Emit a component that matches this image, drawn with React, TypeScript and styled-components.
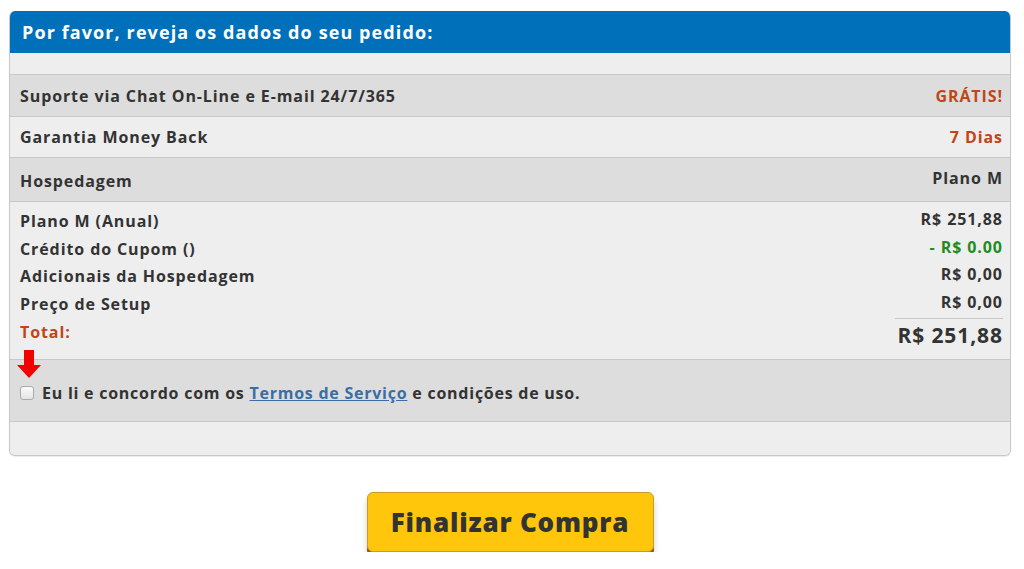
import React from "react";
import styled, { createGlobalStyle } from "styled-components";

const GlobalStyle = createGlobalStyle`
  body {
    margin: 0;
    background: #fff;
    font-family: "Open Sans", "Liberation Sans", sans-serif;
  }
`;

const Page = styled.div`
  padding: 11px 13px 0 9px;
  display: flex;
  flex-direction: column;
  align-items: stretch;
`;

const Panel = styled.div`
  border: 1px solid #c8c8c8;
  border-top: none;
  border-radius: 6px;
  background: #eeeeee;
  overflow: hidden;
  box-shadow: 0 1px 1px rgba(0, 0, 0, 0.08);
`;

const PanelHeader = styled.div`
  background: #0070ba;
  color: #fff;
  font-size: 18px;
  font-weight: 700;
  letter-spacing: 1.1px;
  height: 42px;
  display: flex;
  align-items: center;
  padding: 0 13px;
  margin: 0 -1px;
`;

const Spacer = styled.div<{ $height: number }>`
  height: ${(p) => p.$height}px;
  background: #eeeeee;
`;

const Row = styled.div<{ $dark?: boolean; $height: number }>`
  display: flex;
  justify-content: space-between;
  align-items: center;
  height: ${(p) => p.$height}px;
  box-sizing: border-box;
  padding: 0 8px 0 10px;
  background: ${(p) => (p.$dark ? "#dddddd" : "#eeeeee")};
  border-top: 1px solid #c8c8c8;
  font-size: 16px;
  font-weight: 700;
  letter-spacing: 0.9px;
  color: #333;
`;

const Value = styled.span<{ $color?: string }>`
  color: ${(p) => p.$color || "#333"};
  margin-right: -0.9px;
`;

const Summary = styled.div`
  border-top: 1px solid #c8c8c8;
  padding: 6px 8px 7px 10px;
  display: flex;
  flex-direction: column;
  letter-spacing: 0.9px;
`;

const SummaryLine = styled.div`
  display: flex;
  justify-content: space-between;
  font-size: 16px;
  font-weight: 700;
  color: #333;
  height: 27.5px;
  line-height: 27px;
`;

const LineValue = styled(Value)`
  line-height: 22px;
`;

const TotalLine = styled.div`
  display: flex;
  justify-content: space-between;
  align-items: flex-start;
  font-weight: 700;
`;

const TotalLabel = styled.span`
  color: #c0461a;
  font-size: 16px;
  line-height: 24px;
  padding-top: 2px;
`;

const TotalValue = styled.span`
  color: #333;
  font-size: 21px;
  border-top: 1px solid #c8c8c8;
  min-width: 108px;
  text-align: right;
  line-height: 33px;
  margin-right: -0.9px;
`;

const Agree = styled.div`
  position: relative;
  background: #dddddd;
  border-top: 1px solid #c8c8c8;
  border-bottom: 1px solid #c8c8c8;
  height: 63px;
  box-sizing: border-box;
  display: flex;
  align-items: center;
  padding: 4px 10px 0 10px;
  font-size: 16px;
  font-weight: 700;
  letter-spacing: 0.75px;
  color: #333;
`;

const Arrow = styled.svg`
  position: absolute;
  left: 7px;
  top: -10px;
`;

const Check = styled.span`
  width: 12px;
  height: 12px;
  border: 1px solid #aaa;
  border-radius: 3px;
  background: linear-gradient(#fafafa, #e4e4e4);
  margin-right: 8px;
  flex-shrink: 0;
`;

const TermsLink = styled.a`
  color: #3a6ea5;
  text-decoration: underline;
  margin: 0 5px;
`;

const ButtonWrap = styled.div`
  display: flex;
  justify-content: center;
  padding-top: 36px;
`;

const BuyButton = styled.button`
  width: 287px;
  height: 60px;
  background: #ffc60b;
  border: 1px solid #c9992a;
  border-radius: 6px;
  box-shadow: 0 4px 0 #8a5b2a, 0 6px 6px rgba(0, 0, 0, 0.18);
  font-family: "Open Sans", "Liberation Sans", sans-serif;
  font-size: 26px;
  font-weight: 800;
  letter-spacing: 0.8px;
  color: #333;
  cursor: pointer;
`;

export default function App() {
  return (
    <>
      <GlobalStyle />
      <Page>
        <Panel>
          <PanelHeader>Por favor, reveja os dados do seu pedido:</PanelHeader>
          <Spacer $height={21} />
          <Row $dark $height={42}>
            <span>Suporte via Chat On-Line e E-mail 24/7/365</span>
            <Value $color="#c0461a">GRÁTIS!</Value>
          </Row>
          <Row $height={41}>
            <span>Garantia Money Back</span>
            <Value $color="#c0461a">7 Dias</Value>
          </Row>
          <Row $dark $height={44}>
            <span style={{ paddingTop: 3 }}>Hospedagem</span>
            <Value style={{ paddingBottom: 4 }}>Plano M</Value>
          </Row>
          <Summary>
            <SummaryLine>
              <span>Plano M (Anual)</span>
              <LineValue>R$ 251,88</LineValue>
            </SummaryLine>
            <SummaryLine>
              <span>Crédito do Cupom ()</span>
              <LineValue $color="#1e8c1e">- R$ 0.00</LineValue>
            </SummaryLine>
            <SummaryLine>
              <span>Adicionais da Hospedagem</span>
              <LineValue>R$ 0,00</LineValue>
            </SummaryLine>
            <SummaryLine>
              <span>Preço de Setup</span>
              <LineValue>R$ 0,00</LineValue>
            </SummaryLine>
            <TotalLine>
              <TotalLabel>Total:</TotalLabel>
              <TotalValue>R$ 251,88</TotalValue>
            </TotalLine>
          </Summary>
          <Agree>
            <Arrow width="24" height="28" viewBox="0 0 24 28">
              <polygon points="7,0 17,0 17,15 24,15 12,28 0,15 7,15" fill="#f20000" />
            </Arrow>
            <Check />
            Eu li e concordo com os
            <TermsLink href="#">Termos de Serviço</TermsLink>
            e condições de uso.
          </Agree>
          <Spacer $height={33} />
        </Panel>
        <ButtonWrap>
          <BuyButton>Finalizar Compra</BuyButton>
        </ButtonWrap>
      </Page>
    </>
  );
}
